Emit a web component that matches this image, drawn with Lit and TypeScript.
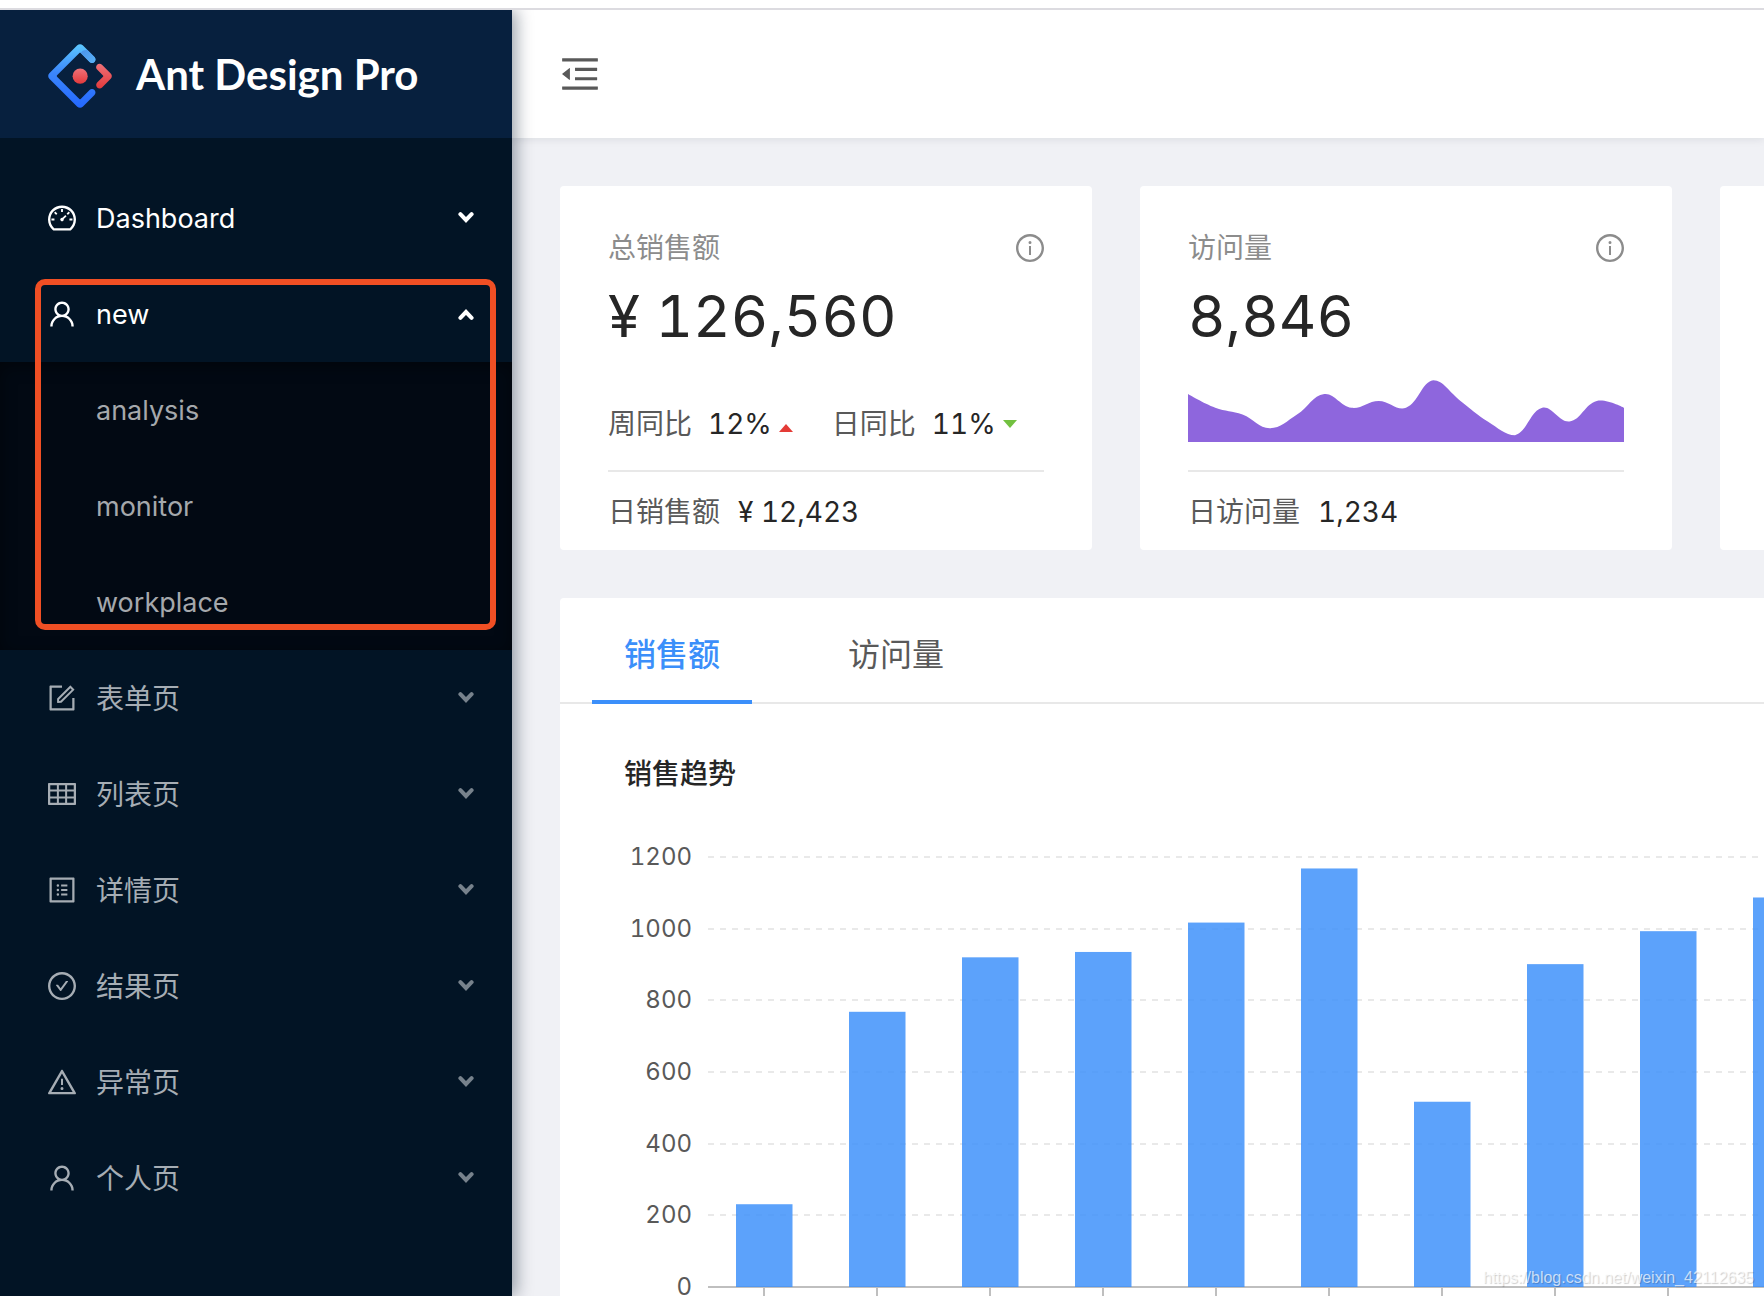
import { LitElement, html, svg, css } from "lit";
import { customElement, property, state } from "lit/decorators.js";
import { classMap } from "lit/directives/class-map.js";

const ICONS: Record<string, string> = {
  dashboard:
    "M924.8 385.6a446.7 446.7 0 0 0-96-142.4 446.7 446.7 0 0 0-142.4-96C631.1 123.8 572.5 112 512 112s-119.1 11.8-174.4 35.2a446.7 446.7 0 0 0-142.4 96 446.7 446.7 0 0 0-96 142.4C75.8 440.9 64 499.5 64 560c0 132.7 58.3 257.7 159.9 343.1l1.7 1.4c5.8 4.8 13.1 7.5 20.6 7.5h531.7c7.5 0 14.8-2.7 20.6-7.5l1.7-1.4C901.7 817.7 960 692.7 960 560c0-60.5-11.9-119.1-35.2-174.4zM761.4 836H262.6A371.12 371.12 0 0 1 140 560c0-99.4 38.7-192.8 109-263 70.3-70.3 163.7-109 263-109 99.4 0 192.8 38.7 263 109 70.3 70.3 109 163.7 109 263 0 105.6-44.5 205.5-122.6 276zM623.5 421.5a8.03 8.03 0 0 0-11.3 0L527.7 506c-18.7-5-39.4-.2-54.1 14.5a55.95 55.95 0 0 0 0 79.2 55.95 55.95 0 0 0 79.2 0 55.87 55.87 0 0 0 14.5-54.1l84.5-84.5c3.1-3.1 3.1-8.2 0-11.3l-28.3-28.3zM490 320h44c4.4 0 8-3.6 8-8v-80c0-4.4-3.6-8-8-8h-44c-4.4 0-8 3.6-8 8v80c0 4.4 3.6 8 8 8zm260 218v44c0 4.4 3.6 8 8 8h80c4.4 0 8-3.6 8-8v-44c0-4.4-3.6-8-8-8h-80c-4.4 0-8 3.6-8 8zm12.7-197.2l-31.1-31.1a8.03 8.03 0 0 0-11.3 0l-56.6 56.6a8.03 8.03 0 0 0 0 11.3l31.1 31.1c3.1 3.1 8.2 3.1 11.3 0l56.6-56.6c3.1-3.1 3.1-8.2 0-11.3zm-458.6-31.1a8.03 8.03 0 0 0-11.3 0l-31.1 31.1a8.03 8.03 0 0 0 0 11.3l56.6 56.6c3.1 3.1 8.2 3.1 11.3 0l31.1-31.1c3.1-3.1 3.1-8.2 0-11.3l-56.6-56.6zM262 530h-80c-4.4 0-8 3.6-8 8v44c0 4.4 3.6 8 8 8h80c4.4 0 8-3.6 8-8v-44c0-4.4-3.6-8-8-8z",
  user: "M858.5 763.6a374 374 0 0 0-80.6-119.5 375.63 375.63 0 0 0-119.5-80.6c-.4-.2-.8-.3-1.2-.5C719.5 518 760 444.7 760 362c0-137-111-248-248-248S264 225 264 362c0 82.7 40.5 156 102.8 201.1-.4.2-.8.3-1.2.5-44.8 18.9-85 46-119.5 80.6a375.63 375.63 0 0 0-80.6 119.5A371.7 371.7 0 0 0 136 901.8a8 8 0 0 0 8 8.2h60c4.4 0 7.9-3.5 8-7.8 2-77.2 33-149.5 87.8-204.3 56.7-56.7 132-87.9 212.2-87.9s155.5 31.2 212.2 87.9C779 752.7 810 825 812 902.2c.1 4.4 3.6 7.8 8 7.8h60a8 8 0 0 0 8-8.2c-1-47.8-10.9-94.3-29.5-138.2zM512 534c-45.9 0-89.1-17.9-121.6-50.4S340 407.9 340 362c0-45.9 17.9-89.1 50.4-121.6S466.1 190 512 190s89.1 17.9 121.6 50.4S684 316.1 684 362c0 45.9-17.9 89.1-50.4 121.6S557.9 534 512 534z",
  form: "M904 512h-56c-4.4 0-8 3.6-8 8v320H184V184h320c4.4 0 8-3.6 8-8v-56c0-4.4-3.6-8-8-8H144c-17.7 0-32 14.3-32 32v736c0 17.7 14.3 32 32 32h736c17.7 0 32-14.3 32-32V520c0-4.4-3.6-8-8-8zM355.9 534.9L354 653.8c-.1 8.9 7.1 16.2 16 16.2h.4l118-2.9c2-.1 4-.9 5.4-2.3l415.9-415c3.1-3.1 3.1-8.2 0-11.3L785.4 114.3c-1.6-1.6-3.6-2.3-5.7-2.3s-4.1.8-5.7 2.3l-415.8 415a8.3 8.3 0 0 0-2.3 5.6zm63.5 23.6L779.7 199l45.2 45.1-360.5 359.7-45.7 1.1.7-46.4z",
  table:
    "M928 160H96c-17.7 0-32 14.3-32 32v640c0 17.7 14.3 32 32 32h832c17.7 0 32-14.3 32-32V192c0-17.7-14.3-32-32-32zm-40 208H676V232h212v136zm0 224H676V432h212v160zM412 432h200v160H412V432zm200-64H412V232h200v136zm-476 64h212v160H136V432zm0-200h212v136H136V232zm0 424h212v136H136V656zm276 0h200v136H412V656zm476 136H676V656h212v136z",
  profile:
    "M880 112H144c-17.7 0-32 14.3-32 32v736c0 17.7 14.3 32 32 32h736c17.7 0 32-14.3 32-32V144c0-17.7-14.3-32-32-32zm-40 728H184V184h656v656zM492 400h184c4.4 0 8-3.6 8-8v-48c0-4.4-3.6-8-8-8H492c-4.4 0-8 3.6-8 8v48c0 4.4 3.6 8 8 8zm0 144h184c4.4 0 8-3.6 8-8v-48c0-4.4-3.6-8-8-8H492c-4.4 0-8 3.6-8 8v48c0 4.4 3.6 8 8 8zm0 144h184c4.4 0 8-3.6 8-8v-48c0-4.4-3.6-8-8-8H492c-4.4 0-8 3.6-8 8v48c0 4.4 3.6 8 8 8zM340 368a40 40 0 1 0 80 0 40 40 0 1 0-80 0zm0 144a40 40 0 1 0 80 0 40 40 0 1 0-80 0zm0 144a40 40 0 1 0 80 0 40 40 0 1 0-80 0z",
  check:
    "M699 353h-46.9c-10.2 0-19.9 4.9-25.9 13.3L469 584.3l-71.2-98.8c-6-8.3-15.6-13.3-25.9-13.3H325c-6.5 0-10.3 7.4-6.5 12.7l124.6 172.8a31.8 31.8 0 0 0 51.7 0l210.6-292c3.9-5.3.1-12.7-6.4-12.7zM512 64C264.6 64 64 264.6 64 512s200.6 448 448 448 448-200.6 448-448S759.4 64 512 64zm0 820c-205.4 0-372-166.6-372-372s166.6-372 372-372 372 166.6 372 372-166.6 372-372 372z",
  warning:
    "M464 720a48 48 0 1 0 96 0 48 48 0 1 0-96 0zm16-304v184c0 4.4 3.6 8 8 8h48c4.4 0 8-3.6 8-8V416c0-4.4-3.6-8-8-8h-48c-4.4 0-8 3.6-8 8zm475.7 440l-416-720c-6.2-10.7-16.9-16-27.7-16s-21.6 5.3-27.7 16l-416 720C56 877.4 71.4 904 96 904h832c24.6 0 40-26.6 27.7-48zm-783.5-27.9L512 239.9l339.8 588.2H172.2z",
  info: "M512 64C264.6 64 64 264.6 64 512s200.6 448 448 448 448-200.6 448-448S759.4 64 512 64zm0 820c-205.4 0-372-166.6-372-372s166.6-372 372-372 372 166.6 372 372-166.6 372-372 372zM464 336a48 48 0 1 0 96 0 48 48 0 1 0-96 0zm72 112h-48c-4.4 0-8 3.6-8 8v272c0 4.4 3.6 8 8 8h48c4.4 0 8-3.6 8-8V456c0-4.4-3.6-8-8-8z",
  fold: "M408 442h480c4.4 0 8-3.6 8-8v-56c0-4.4-3.6-8-8-8H408c-4.4 0-8 3.6-8 8v56c0 4.4 3.6 8 8 8zm-8 204c0 4.4 3.6 8 8 8h480c4.4 0 8-3.6 8-8v-56c0-4.4-3.6-8-8-8H408c-4.4 0-8 3.6-8 8v56zm504-486H120c-4.4 0-8 3.6-8 8v56c0 4.4 3.6 8 8 8h784c4.4 0 8-3.6 8-8v-56c0-4.4-3.6-8-8-8zm0 632H120c-4.4 0-8 3.6-8 8v56c0 4.4 3.6 8 8 8h784c4.4 0 8-3.6 8-8v-56c0-4.4-3.6-8-8-8zM115.4 518.9L271.7 642c5.8 4.6 14.4.5 14.4-6.9V388.9c0-7.4-8.5-11.5-14.4-6.9L115.4 505.1a8.74 8.74 0 0 0 0 13.8z",
};

const icon = (name: string) => html`
  <svg class="icon" viewBox="64 64 896 896" aria-hidden="true">
    <path fill="currentColor" d=${ICONS[name]}></path>
  </svg>
`;

/** Cubic spline through the points, control points kept inside the data bounds. */
function smoothPath(pts: number[][]): string {
  const xs = pts.map((p) => p[0]);
  const ys = pts.map((p) => p[1]);
  const clamp = (p: number[]) => [
    Math.min(Math.max(p[0], Math.min(...xs)), Math.max(...xs)),
    Math.min(Math.max(p[1], Math.min(...ys)), Math.max(...ys)),
  ];
  const dist = (a: number[], b: number[]) => Math.hypot(a[0] - b[0], a[1] - b[1]);
  const handles = pts.map((p, i) => {
    if (i === 0 || i === pts.length - 1) return [p, p];
    const a = pts[i - 1];
    const b = pts[i + 1];
    const v = [(b[0] - a[0]) * 0.4, (b[1] - a[1]) * 0.4];
    const d0 = dist(p, a);
    const d1 = dist(p, b);
    const k0 = d0 / (d0 + d1);
    const k1 = d1 / (d0 + d1);
    return [
      clamp([p[0] - v[0] * k0, p[1] - v[1] * k0]),
      clamp([p[0] + v[0] * k1, p[1] + v[1] * k1]),
    ];
  });
  let d = `M${pts[0].join(" ")}`;
  for (let i = 1; i < pts.length; i++) {
    d += `C${handles[i - 1][1].join(" ")} ${handles[i][0].join(" ")} ${pts[i].join(" ")}`;
  }
  return d;
}

@customElement("mini-area")
export class MiniArea extends LitElement {
  @property({ attribute: false }) values: number[] = [];

  static styles = css`
    :host {
      display: block;
      width: 100%;
    }
    .area {
      display: block;
      width: 100%;
      height: 64px;
      fill: #8e66dd;
    }
  `;

  render() {
    const w = 436;
    const h = 64;
    const step = w / (this.values.length - 1);
    const pts = this.values.map((v, i) => [i * step, h - v * 6.85]);
    return html`
      <svg class="area" viewBox="0 0 ${w} ${h}" preserveAspectRatio="none" aria-hidden="true">
        <path d="${smoothPath(pts)}L${w} ${h}L0 ${h}Z"></path>
      </svg>
    `;
  }
}

@customElement("sales-chart")
export class SalesChart extends LitElement {
  @property({ attribute: false }) values: number[] = [];

  static styles = css`
    :host {
      display: block;
    }
    .chart {
      display: block;
      width: 100%;
      height: 500px;
      overflow: hidden;
      font-family: Inter, "Liberation Sans", sans-serif;
      font-size: 24px;
      font-variant-numeric: tabular-nums;
    }
    .label {
      fill: #595959;
      text-anchor: end;
    }
    .grid {
      stroke: #e9e9e9;
      stroke-width: 2;
      stroke-dasharray: 6 6;
    }
    .axis {
      stroke: #bfbfbf;
      stroke-width: 2;
    }
    .bar {
      fill: #3b8ffa;
      fill-opacity: 0.83;
    }
  `;

  render() {
    const base = 491;
    const unit = 430 / 1200;
    const left = 84;
    const ticks = [0, 200, 400, 600, 800, 1000, 1200];
    return html`
      <svg class="chart" role="img" aria-label="销售趋势">
        ${ticks.map((t) => {
          const y = Math.round(base - t * unit);
          return svg`
            <text class="label" x="68" y=${y + 8}>${t}</text>
            <line class=${t ? "grid" : "axis"} x1=${left} x2="100%" y1=${y} y2=${y}></line>
          `;
        })}
        ${this.values.map((v, i) => {
          const mid = left + 56 + i * 113;
          return svg`
            <rect class="bar" x=${mid - 28} width="56.5" y=${base - v * unit} height=${v * unit}></rect>
            <line class="axis" x1=${mid} x2=${mid} y1=${base + 1} y2=${base + 9}></line>
          `;
        })}
      </svg>
    `;
  }
}

interface MenuEntry {
  key: string;
  icon: string;
  label: string;
  bright?: boolean;
  children?: string[];
}

const MENU: MenuEntry[] = [
  { key: "dashboard", icon: "dashboard", label: "Dashboard", bright: true },
  { key: "new", icon: "user", label: "new", bright: true, children: ["analysis", "monitor", "workplace"] },
  { key: "form", icon: "form", label: "表单页" },
  { key: "list", icon: "table", label: "列表页" },
  { key: "profile", icon: "profile", label: "详情页" },
  { key: "result", icon: "check", label: "结果页" },
  { key: "exception", icon: "warning", label: "异常页" },
  { key: "account", icon: "user", label: "个人页" },
];

@customElement("app-root")
export class AppRoot extends LitElement {
  @state() private open = "new";
  @state() private tab = 0;

  static styles = css`
    :host {
      display: block;
      font-family: Inter, "Noto Sans CJK SC", sans-serif;
      font-size: 28px;
      line-height: 44px;
      font-variant-numeric: tabular-nums;
      color: #262626;
    }
    * {
      box-sizing: border-box;
    }
    button {
      font: inherit;
      border: 0;
      background: none;
      padding: 0;
      cursor: pointer;
    }
    h1,
    h2,
    ul {
      margin: 0;
      padding: 0;
      list-style: none;
    }
    .page {
      position: relative;
      display: flex;
      min-height: calc(100vh - 8px);
      border-top: 2px solid #dcdbe0;
      background: #f0f1f5;
      overflow: hidden;
    }
    .frame {
      background: #fff;
      padding-top: 8px;
      overflow: hidden;
    }
    .icon {
      width: 28px;
      height: 28px;
      flex: none;
      display: block;
    }

    /* sidebar */
    .sider {
      flex: none;
      width: 512px;
      background: #021425;
      box-shadow: 4px 0 16px rgba(0, 21, 41, 0.4);
      z-index: 2;
    }
    .brand {
      display: flex;
      align-items: center;
      gap: 24px;
      height: 128px;
      padding-left: 48px;
      background: #07203e;
      color: #fff;
      text-decoration: none;
    }
    .logo {
      width: 64px;
      height: 64px;
      margin-top: 4px;
    }
    .brand-name {
      font-family: Lato, "Open Sans", sans-serif;
      font-size: 42px;
      font-weight: 700;
      line-height: 64px;
    }
    .menu {
      padding-top: 32px;
    }
    .group {
      position: relative;
    }
    .item {
      display: flex;
      align-items: center;
      gap: 20px;
      width: 100%;
      height: 96px;
      padding: 0 38px 0 48px;
      color: #a6adb4;
      text-align: left;
    }
    .item.bright {
      color: #fff;
      font-size: 27px;
    }
    .item-label {
      flex: 1;
      padding-top: 2px;
    }
    .chevron {
      width: 16px;
      height: 12px;
      color: #77828c;
    }
    .bright .chevron {
      color: #fff;
    }
    .chevron.up {
      transform: rotate(180deg);
    }
    .sub {
      background: #020913;
      box-shadow: inset 0 4px 16px rgba(0, 0, 0, 0.45);
    }
    .sub-link {
      display: block;
      padding: 2px 0 0 96px;
      font-size: 27px;
      line-height: 94px;
      color: #a5a8ac;
      text-decoration: none;
    }
    .marker {
      position: absolute;
      inset: 13px 16px 20px 35px;
      border: 6px solid #f04f24;
      border-radius: 10px;
      pointer-events: none;
    }

    /* main */
    .main {
      flex: 1;
      min-width: 0;
    }
    .topbar {
      display: flex;
      align-items: center;
      height: 128px;
      padding-left: 48px;
      background: #fff;
      box-shadow: 0 2px 8px rgba(0, 21, 41, 0.08);
    }
    .trigger {
      color: #595959;
    }
    .trigger .icon {
      width: 40px;
      height: 40px;
    }
    .content {
      display: flex;
      flex-direction: column;
      gap: 48px;
      padding: 48px 0 0 48px;
    }
    .cards {
      display: grid;
      grid-auto-flow: column;
      grid-auto-columns: 532px;
      gap: 48px;
    }
    .card {
      padding: 40px 48px 16px;
      background: #fff;
      border-radius: 4px;
    }
    .card-head {
      display: flex;
      align-items: center;
      justify-content: space-between;
      color: #8c8c8c;
    }
    .total {
      margin-top: 8px;
      font-size: 58px;
      line-height: 76px;
      white-space: nowrap;
    }
    .card-body {
      display: flex;
      align-items: flex-end;
      height: 92px;
      margin-bottom: 24px;
    }
    .card-body.chart {
      padding-bottom: 4px;
    }
    .trends {
      display: flex;
      gap: 36px;
      white-space: nowrap;
    }
    .trend {
      display: flex;
      align-items: center;
    }
    .muted {
      color: #595959;
      margin-right: 16px;
    }
    .caret {
      width: 20px;
      height: 24px;
      margin-left: 4px;
    }
    .caret.up {
      fill: #e43b36;
    }
    .caret.down {
      fill: #72c140;
    }
    .card-foot {
      padding-top: 18px;
      border-top: 2px solid #e8e8e8;
      white-space: nowrap;
    }
    .card-foot .muted {
      margin-right: 18px;
    }
    .panel {
      background: #fff;
      border-radius: 4px 0 0 0;
    }
    .tabs {
      display: flex;
      gap: 64px;
      padding-left: 32px;
      box-shadow: inset 0 -2px #e8e8e8;
    }
    .tab {
      height: 106px;
      padding: 32px 32px 20px;
      font-size: 32px;
      line-height: 50px;
      color: #595959;
      border-bottom: 4px solid transparent;
    }
    .tab.active {
      color: #3b8ffa;
      font-weight: 500;
      border-color: #3b8ffa;
    }
    .panel-body {
      padding: 48px 0 0 64px;
    }
    .panel-title {
      font-size: 28px;
      font-weight: 500;
      line-height: 44px;
    }
    .watermark {
      position: absolute;
      right: 10px;
      bottom: 8px;
      font-family: "Liberation Sans", sans-serif;
      font-size: 16px;
      line-height: 20px;
      color: rgba(255, 255, 255, 0.7);
      text-shadow: 1px 1px 1px rgba(0, 0, 0, 0.2);
    }
  `;

  private renderLogo() {
    return html`
      <svg class="logo" viewBox="0 0 200 200" aria-hidden="true">
        <defs>
          <linearGradient id="blue" x1="0" y1="0" x2="0" y2="1">
            <stop offset="0" stop-color="#5cc8ff"></stop>
            <stop offset="0.45" stop-color="#3b86fb"></stop>
            <stop offset="1" stop-color="#2468ff"></stop>
          </linearGradient>
          <linearGradient id="tip" x1="0" y1="0" x2="1" y2="1">
            <stop offset="0" stop-color="#4a8fe8" stop-opacity="0.9"></stop>
            <stop offset="1" stop-color="#5ab4f8"></stop>
          </linearGradient>
          <linearGradient id="red" x1="0" y1="0" x2="0" y2="1">
            <stop offset="0" stop-color="#ee7178"></stop>
            <stop offset="1" stop-color="#e33a3c"></stop>
          </linearGradient>
        </defs>
        <path
          fill="url(#blue)"
          d="M91.588 4.177L4.18 91.513C-.52 96.208-.52 103.792 4.18 108.487L91.588 195.823C96.287 200.519 103.877 200.519 108.577 195.823L145.225 159.205C149.434 155 149.434 148.182 145.225 143.977C141.017 139.772 134.194 139.772 129.985 143.977L102.202 171.737C101.032 172.906 99.257 172.906 98.088 171.737L28.286 101.993C27.116 100.824 27.116 99.051 28.286 97.882L98.088 28.138C99.257 26.969 101.032 26.969 102.202 28.138L129.985 55.898C134.194 60.103 141.017 60.103 145.225 55.898C149.434 51.693 149.434 44.876 145.225 40.671L108.581 4.056C103.862 -.538 96.269 -.501 91.588 4.177Z"
        ></path>
        <path
          fill="url(#tip)"
          d="M102.202 28.138L129.985 55.898C134.194 60.103 141.017 60.103 145.225 55.898C149.434 51.693 149.434 44.876 145.225 40.671L124 19.5C116 17 106 20 102.202 28.138Z"
        ></path>
        <path
          fill="url(#red)"
          d="M153.686 135.855C157.894 140.06 164.717 140.06 168.926 135.855L195.96 108.843C200.659 104.147 200.659 96.564 195.961 91.869L168.691 64.718C164.472 60.518 157.647 60.524 153.436 64.732C149.227 68.937 149.227 75.754 153.436 79.959L171.854 98.362C173.024 99.531 173.024 101.305 171.854 102.473L153.686 120.627C149.477 124.832 149.477 131.65 153.686 135.855Z"
        ></path>
        <circle fill="url(#red)" cx="100.5" cy="100.4" r="23.6"></circle>
      </svg>
    `;
  }

  private renderEntry(entry: MenuEntry) {
    const open = this.open === entry.key && !!entry.children;
    return html`
      <li class="group">
        <button
          class=${classMap({ item: true, bright: !!entry.bright })}
          type="button"
          aria-expanded=${open ? "true" : "false"}
          @click=${() => (this.open = this.open === entry.key ? "" : entry.key)}
        >
          ${icon(entry.icon)}
          <span class="item-label">${entry.label}</span>
          <svg class=${classMap({ chevron: true, up: open })} viewBox="0 0 16 12" aria-hidden="true">
            <path
              d="M2.4 2.2L8 8L13.6 2.2"
              fill="none"
              stroke="currentColor"
              stroke-width="4"
              stroke-linecap="round"
            ></path>
          </svg>
        </button>
        ${open
          ? html`
              <ul class="sub">
                ${entry.children!.map((c) => html`<li><a class="sub-link" href="#${c}">${c}</a></li>`)}
              </ul>
              <div class="marker"></div>
            `
          : ""}
      </li>
    `;
  }

  private renderTrend(label: string, value: string, up: boolean) {
    return html`
      <div class="trend">
        <span class="muted">${label}</span><span>${value}</span>
        <svg class="caret ${up ? "up" : "down"}" viewBox="0 0 20 24" aria-hidden="true">
          <path d=${up ? "M10 12L17 20H3Z" : "M3 8H17L10 16Z"}></path>
        </svg>
      </div>
    `;
  }

  private renderCardHead(title: string) {
    return html`<div class="card-head"><span>${title}</span>${icon("info")}</div>`;
  }

  render() {
    return html`
      <div class="frame">
        <div class="page">
          <aside class="sider">
            <a class="brand" href="#home">
              ${this.renderLogo()}
              <h1 class="brand-name">Ant Design Pro</h1>
            </a>
            <nav>
              <ul class="menu">
                ${MENU.map((m) => this.renderEntry(m))}
              </ul>
            </nav>
          </aside>
          <div class="main">
            <header class="topbar">
              <button class="trigger" type="button" aria-label="menu">${icon("fold")}</button>
            </header>
            <main class="content">
              <div class="cards">
                <section class="card">
                  ${this.renderCardHead("总销售额")}
                  <div class="total">¥ 126,560</div>
                  <div class="card-body">
                    <div class="trends">
                      ${this.renderTrend("周同比", "12%", true)} ${this.renderTrend("日同比", "11%", false)}
                    </div>
                  </div>
                  <div class="card-foot"><span class="muted">日销售额</span><span>¥ 12,423</span></div>
                </section>
                <section class="card">
                  ${this.renderCardHead("访问量")}
                  <div class="total">8,846</div>
                  <div class="card-body chart">
                    <mini-area .values=${[7, 5, 4, 2, 4, 7, 5, 6, 5, 9, 6, 3, 1, 5, 3, 6, 5]}></mini-area>
                  </div>
                  <div class="card-foot"><span class="muted">日访问量</span><span>1,234</span></div>
                </section>
                <section class="card"></section>
              </div>
              <section class="panel">
                <div class="tabs" role="tablist">
                  ${["销售额", "访问量"].map(
                    (t, i) => html`
                      <button
                        class=${classMap({ tab: true, active: this.tab === i })}
                        type="button"
                        role="tab"
                        aria-selected=${this.tab === i ? "true" : "false"}
                        @click=${() => (this.tab = i)}
                      >
                        ${t}
                      </button>
                    `
                  )}
                </div>
                <div class="panel-body">
                  <h2 class="panel-title">销售趋势</h2>
                  <sales-chart .values=${[231, 768, 920, 935, 1017, 1168, 517, 901, 993, 1087]}></sales-chart>
                </div>
              </section>
            </main>
          </div>
          <div class="watermark">https://blog.csdn.net/weixin_42112635</div>
        </div>
      </div>
    `;
  }
}
